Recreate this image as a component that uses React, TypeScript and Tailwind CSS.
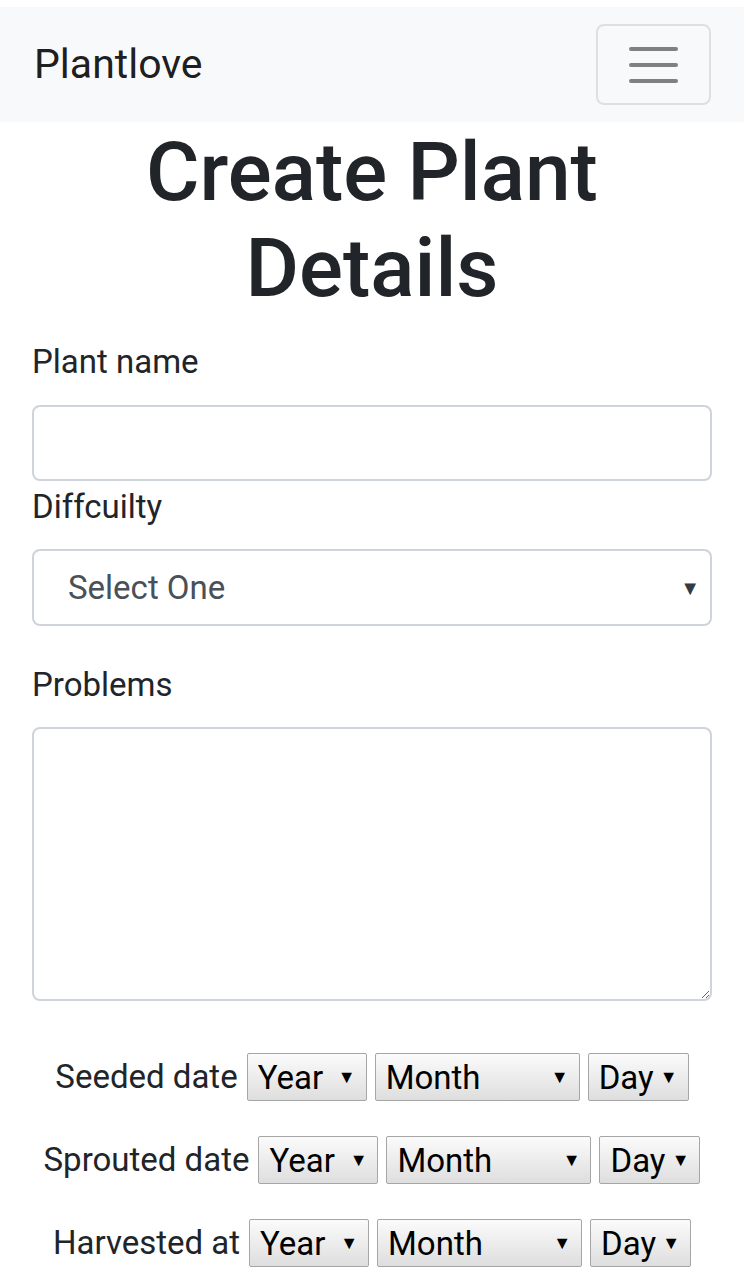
import React from 'react';

// --- Native-looking select (gray gradient) ---
const FakeSelect: React.FC<{ label: string; width: string }> = ({ label, width }) => (
  <div
    className={`${width} h-[48px] flex items-center justify-between pl-[10px] pr-[10px] border border-[#a6a6a6] rounded-[2px] bg-gradient-to-b from-[#fbfbfb] to-[#dedede] text-black text-[33px] leading-none`}
  >
    <span>{label}</span>
    <span className="text-[18px]">▼</span>
  </div>
);

const DateRow: React.FC<{ label: string; widths: [string, string, string] }> = ({ label, widths }) => (
  <div className="flex items-center justify-center h-[48px]">
    <span className="mr-[9px] text-[33px] text-[#212529]">{label}</span>
    <div className="flex gap-[8px]">
      <FakeSelect label="Year" width={widths[0]} />
      <FakeSelect label="Month" width={widths[1]} />
      <FakeSelect label="Day" width={widths[2]} />
    </div>
  </div>
);

const App: React.FC = () => {
  return (
    <div className="w-[744px] min-h-[1280px] bg-white pt-[7px] font-['Roboto',sans-serif] text-[#212529]">
      {/* Navbar */}
      <nav className="h-[115px] bg-[#f8f9fa] flex items-center justify-between pl-[34px] pr-[33px]">
        <span className="text-[41px] leading-none text-black/90">Plantlove</span>
        <button className="w-[115px] h-[81px] border-2 border-black/10 rounded-[8px] flex flex-col items-center justify-center gap-[12px]">
          <span className="block w-[49px] h-[4px] rounded-full bg-[#808080]" />
          <span className="block w-[49px] h-[4px] rounded-full bg-[#808080]" />
          <span className="block w-[49px] h-[4px] rounded-full bg-[#808080]" />
        </button>
      </nav>

      <div className="px-[32px]">
        <h1 className="mt-[2px] mb-[22px] text-center text-[82px] leading-[96px] font-medium">
          Create Plant Details
        </h1>

        <form>
          <label className="block text-[33px] leading-[48px] mb-[19px]">Plant name</label>
          <input className="block w-full h-[76px] border-2 border-[#ced4da] rounded-[8px] px-[24px] text-[32px]" />

          <label className="block text-[33px] leading-[48px] mt-[2px] mb-[18px]">Diffcuilty</label>
          <div className="w-full h-[77px] border-2 border-[#ced4da] rounded-[8px] flex items-center justify-between pl-[34px] pr-[10px] text-[33px] text-[#495057]">
            <span>Select One</span>
            <span className="text-[20px] text-[#343a40]">▼</span>
          </div>

          <label className="block text-[33px] leading-[48px] mt-[35px] mb-[18px]">Problems</label>
          <textarea className="block w-full h-[274px] border-2 border-[#ced4da] rounded-[8px] p-[12px] text-[32px]" />

          <div className="mt-[52px] flex flex-col gap-[35px]">
            <DateRow label="Seeded date" widths={['w-[120px]', 'w-[205px]', 'w-[101px]']} />
            <DateRow label="Sprouted date" widths={['w-[120px]', 'w-[205px]', 'w-[101px]']} />
            <DateRow label="Harvested at" widths={['w-[120px]', 'w-[205px]', 'w-[101px]']} />
          </div>
        </form>
      </div>
    </div>
  );
};

export default App;
